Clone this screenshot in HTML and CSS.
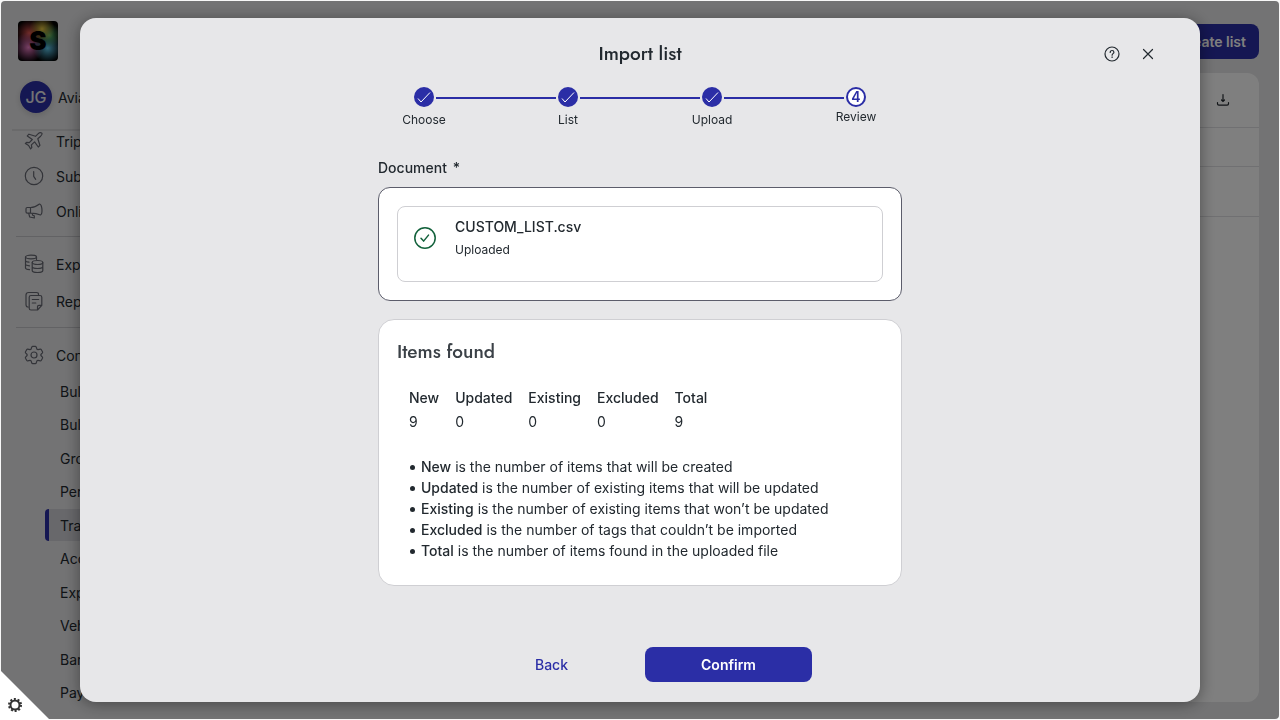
FILE: index.html
```
<!DOCTYPE html>
<html lang="en">
<head>
  <meta charset="UTF-8" />
  <meta name="viewport" content="width=device-width, initial-scale=1" />
  <title>Import list</title>
  <link rel="stylesheet" href="styles.css">
</head>
<body>
  <div class="app">
    <aside class="sidebar">
      <div class="sidebar-top">
        <svg class="logo" viewBox="0 0 40 40" role="img" aria-label="Logo">
          <defs>
            <radialGradient id="red" cx="28%" cy="30%" r="34%"><stop offset="0" stop-color="#e05850" /><stop offset="1" stop-color="#c4404a" stop-opacity="0" /></radialGradient>
            <radialGradient id="yellow" cx="60%" cy="20%" r="32%"><stop offset="0" stop-color="#e8c840" /><stop offset="1" stop-color="#d0b040" stop-opacity="0" /></radialGradient>
            <radialGradient id="green" cx="78%" cy="36%" r="30%"><stop offset="0" stop-color="#58b868" /><stop offset="1" stop-color="#4fb070" stop-opacity="0" /></radialGradient>
            <radialGradient id="blue" cx="74%" cy="68%" r="36%"><stop offset="0" stop-color="#60ccf0" /><stop offset="1" stop-color="#50b8dc" stop-opacity="0" /></radialGradient>
            <radialGradient id="pink" cx="26%" cy="66%" r="38%"><stop offset="0" stop-color="#f080c8" /><stop offset="1" stop-color="#d868b8" stop-opacity="0" /></radialGradient>
          </defs>
          <rect width="40" height="40" rx="4" fill="#000" />
          <rect width="40" height="40" rx="4" fill="url(#red)" />
          <rect width="40" height="40" rx="4" fill="url(#pink)" />
          <rect width="40" height="40" rx="4" fill="url(#blue)" />
          <rect width="40" height="40" rx="4" fill="url(#green)" />
          <rect width="40" height="40" rx="4" fill="url(#yellow)" />
          <text class="logo-letter" x="20" y="29" text-anchor="middle">S</text>
        </svg>
        <div class="user">
          <span class="avatar">JG</span>
          <span>Avia</span>
        </div>
      </div>

      <nav class="nav">
        <a class="nav-item" href="#">
          <svg class="icon" viewBox="0 0 20 20"><path d="M17.8 2.2c-1-1-2.700-.5-3.800.6L11.500 5.300 5 3.200 3.300 4.900l5 3.600-3 3.200-2.700-.4-1.200 1.200 3.200 2 2 3.400 1.200-1.200-.4-2.800 3.200-3 3.700 5.100 1.600-1.700-2.100-6.500 2.800-2.600c1-1 1.900-2.200 1.200-3z" /></svg>
          <span>Trip</span>
        </a>
        <a class="nav-item" href="#">
          <svg class="icon" viewBox="0 0 20 20"><circle cx="10" cy="10" r="8.700" /><path d="M9.700 5.500v4.800l2 3" /></svg>
          <span>Sub</span>
        </a>
        <a class="nav-item" href="#">
          <svg class="icon" viewBox="0 0 20 20"><path d="M6.500 6.500H3.200C2.300 6.500 2 7 2 7.800v3c0 .9.400 1.400 1.200 1.400h3.300zM6.500 6.500c3.500 0 6.500-1.500 9-3.500 2.600-.3 3.500 9.500 1 11-3-1.300-6.500-1.800-10-1.800M4.700 12.300l1 3.700 4.600 1v-2.200l-1.600-.5-.5-2" /></svg>
          <span>Onli</span>
        </a>
        <hr>
        <a class="nav-item tall" href="#">
          <svg class="icon" viewBox="0 0 20 20"><ellipse cx="7" cy="3" rx="5.500" ry="1.800" /><path d="M1.500 3v11c0 .9 1.700 1.500 4 1.700M1.500 6.500c0 .9 1.500 1.500 3.500 1.700M1.500 10c0 .9 1.500 1.600 4 1.800M12.500 3v2.500" /><ellipse cx="13.500" cy="8.500" rx="5.300" ry="2" /><path d="M8.200 8.500v8c0 1.200 2.300 2 5.300 2s5.300-.8 5.300-2v-8M8.200 12.500c0 1.200 2.300 2 5.300 2s5.300-.8 5.300-2" /></svg>
          <span>Exp</span>
        </a>
        <a class="nav-item tall" href="#">
          <svg class="icon" viewBox="0 0 20 20"><path d="M14.500 3.500c0-1.500-.5-2-2-2h-8c-1.500 0-2.500 1-2.500 2.500v9.500c0 1.500.5 2.500 2 2.500M7 4.500h9c1 0 1.800.8 1.800 1.800v8L13.500 19H7c-1 0-1.800-.8-1.800-1.800V6.300c0-1 .8-1.800 1.800-1.800zM13.500 19v-3.200c0-.9.600-1.500 1.500-1.500h2.800M8.300 8.500h6.400M8.300 12h3.500" /></svg>
          <span>Rep</span>
        </a>
        <hr>
        <a class="nav-item tall" href="#">
          <svg class="icon" viewBox="0 0 20 20"><path d="M7 4.200 7.800 2q.2-.6.900-.6h2.600q.7 0 .9.600L13 4.200l1 .5 2.300-.5q.6-.1 1 .5l1.200 2.100q.3.600-.1 1.100L16.900 9.500v1l1.500 1.600q.4.500.1 1.100l-1.200 2.100q-.4.600-1 .5L14 15.300l-1 .5-.8 2.200q-.2.600-.9.600H8.700q-.7 0-.9-.6L7 15.800l-1-.5-2.300.5q-.6.100-1-.5l-1.200-2.100q-.3-.6.100-1.100L3.100 10.500v-1L1.600 7.900q-.4-.5-.1-1.100l1.200-2.100q.4-.6 1-.5L6 4.700z" /><circle cx="10" cy="10" r="3" /></svg>
          <span>Con</span>
        </a>
        <ul class="subnav">
          <li><a href="#">Bull</a></li>
          <li><a href="#">Bull</a></li>
          <li><a href="#">Gro</a></li>
          <li><a href="#">Per</a></li>
          <li><a href="#" class="active">Tra</a></li>
          <li><a href="#">Acc</a></li>
          <li><a href="#">Exp</a></li>
          <li><a href="#">Veh</a></li>
          <li><a href="#">Bar</a></li>
          <li><a href="#">Pay</a></li>
        </ul>
      </nav>
    </aside>

    <main class="main">
      <button type="button" class="btn btn-create">Create list</button>
      <section class="panel">
        <div class="panel-row panel-tools">
          <button type="button" class="icon-btn" aria-label="Download">
            <svg class="icon-dark" width="14" height="14" viewBox="0 0 14 14"><path d="M7 1.500v7M5.500 7l1.500 1.500L8.500 7M1.500 9.500v1.300c0 .9.500 1.400 1.400 1.400h8.200c.9 0 1.400-.5 1.400-1.400V9.500" /></svg>
          </button>
        </div>
        <div class="panel-row panel-head"></div>
        <div class="panel-row panel-line"></div>
      </section>
    </main>
  </div>

  <div class="overlay">
    <div class="modal" role="dialog" aria-modal="true" aria-labelledby="modalTitle">
      <header class="modal-header">
        <h1 id="modalTitle">Import list</h1>
        <div class="modal-actions">
          <button type="button" class="icon-btn" aria-label="Help">
            <svg class="icon-dark" width="16" height="16" viewBox="0 0 16 16"><circle cx="8" cy="8" r="7" /><path d="M6.200 6.400c0-1.100.8-1.900 1.900-1.900s1.800.7 1.800 1.700c0 1.400-1.800 1.500-1.800 3M8.100 10.900v.6" /></svg>
          </button>
          <button type="button" class="icon-btn" aria-label="Close">
            <svg class="icon-dark" width="16" height="16" viewBox="0 0 16 16"><path d="M3.500 3.500l9 9M12.500 3.500l-9 9" /></svg>
          </button>
        </div>
      </header>

      <ol class="steps">
        <li class="step done">
          <span class="dot"><svg width="16" height="16" viewBox="0 0 16 16"><path d="M2 9.500 5 13 14 3.500" /></svg></span>
          <span class="step-label">Choose</span>
        </li>
        <li class="step done">
          <span class="dot"><svg width="16" height="16" viewBox="0 0 16 16"><path d="M2 9.500 5 13 14 3.500" /></svg></span>
          <span class="step-label">List</span>
        </li>
        <li class="step done">
          <span class="dot"><svg width="16" height="16" viewBox="0 0 16 16"><path d="M2 9.500 5 13 14 3.500" /></svg></span>
          <span class="step-label">Upload</span>
        </li>
        <li class="step current" aria-current="step">
          <span class="dot">4</span>
          <span class="step-label">Review</span>
        </li>
      </ol>

      <div class="content">
        <p class="field-label">Document <span class="required">*</span></p>
        <div class="dropzone">
          <div class="file">
            <svg class="file-icon" width="24" height="24" viewBox="0 0 24 24"><circle cx="12" cy="12" r="10.200" /><path d="M8 12.300l2.600 2.800 4.900-6" /></svg>
            <div>
              <p class="file-name">CUSTOM_LIST.csv</p>
              <p class="file-status">Uploaded</p>
            </div>
          </div>
        </div>

        <section class="summary">
          <h2>Items found</h2>
          <table class="counts">
            <thead>
              <tr><th>New</th><th>Updated</th><th>Existing</th><th>Excluded</th><th>Total</th></tr>
            </thead>
            <tbody>
              <tr><td>9</td><td>0</td><td>0</td><td>0</td><td>9</td></tr>
            </tbody>
          </table>
          <ul class="legend">
            <li><b>New</b> is the number of items that will be created</li>
            <li><b>Updated</b> is the number of existing items that will be updated</li>
            <li><b>Existing</b> is the number of existing items that won’t be updated</li>
            <li><b>Excluded</b> is the number of tags that couldn’t be imported</li>
            <li><b>Total</b> is the number of items found in the uploaded file</li>
          </ul>
        </section>
      </div>

      <footer class="modal-footer">
        <button type="button" class="btn btn-text">Back</button>
        <button type="button" class="btn btn-primary">Confirm</button>
      </footer>
    </div>
  </div>

  <button type="button" class="corner" aria-label="Settings">
    <svg width="16" height="16" viewBox="0 0 16 16"><circle class="gear-teeth" cx="8" cy="8" r="6" /><circle class="gear-ring" cx="8" cy="8" r="4.500" /></svg>
  </button>
</body>
</html>
```
FILE: styles.css
```
* {
  box-sizing: border-box;
}

body {
  margin: 0;
  padding: 1px;
  height: 100vh;
  overflow: hidden;
  background: #f7f7f7;
  font-family: Inter, sans-serif;
  font-size: 14px;
  color: #22292f;
}

h1,
h2,
p,
ul,
ol {
  margin: 0;
  padding: 0;
}

ul,
ol {
  list-style: none;
}

a {
  color: inherit;
  text-decoration: none;
}

button {
  border: none;
  padding: 0;
  background: none;
  font: inherit;
  cursor: pointer;
}

svg {
  display: block;
  fill: none;
  flex-shrink: 0;
}

/* page behind the modal */
.app {
  height: 100%;
  display: flex;
  background: #e7e7e9;
  border-radius: 4px;
  overflow: hidden;
}

.sidebar {
  width: 240px;
  flex-shrink: 0;
  overflow: hidden;
}

.sidebar-top {
  position: relative;
  height: 130px;
  margin-left: 11px;
  padding: 20px 0 0 6px;
  border-bottom: 2px solid #d4d4d7;
}

.logo {
  width: 40px;
  height: 40px;
}

.logo-letter {
  font-family: Inter, sans-serif;
  font-weight: 900;
  font-size: 26px;
  fill: #000;
}

.user {
  display: flex;
  align-items: center;
  gap: 6px;
  margin: 20px 0 0 2px;
}

.avatar {
  display: flex;
  align-items: center;
  justify-content: center;
  width: 32px;
  height: 32px;
  border-radius: 50%;
  background: #2b2ea6;
  color: #e7e7e9;
  font-size: 16px;
  font-weight: 500;
  box-shadow: 0 2px 6px rgba(0, 0, 0, 0.15);
}

.nav {
  margin-top: -7px;
  padding-left: 15px;
}

.nav-item {
  display: flex;
  align-items: center;
  gap: 12px;
  height: 34px;
  margin-bottom: 1px;
  padding-left: 8px;
}

.nav-item.tall {
  height: 36px;
}

.nav hr {
  height: 1px;
  margin: 8px 0 9px;
  border: none;
  background: #c4c4c8;
}

.icon {
  width: 20px;
  height: 20px;
  stroke: #666872;
  stroke-width: 1.200;
  stroke-linecap: round;
  stroke-linejoin: round;
}

.subnav {
  display: grid;
  grid-auto-rows: 1fr;
  height: 335px;
  margin: 2px 0 0 29px;
}

.subnav a {
  display: flex;
  align-items: center;
  height: 32px;
  padding-left: 11px;
  border-left: 4px solid transparent;
}

.subnav .active {
  border-radius: 4px;
  border-color: #2b2ea6;
  background: #d0d0d6;
}

.main {
  flex: 1;
  display: flex;
  flex-direction: column;
  padding: 23px 20px 17px 0;
}

.btn {
  height: 35px;
  border-radius: 8px;
  font-weight: 600;
}

.btn-create {
  align-self: flex-end;
  padding: 0 13px;
  background: #2b2ea6;
  color: #fff;
}

.panel {
  flex: 1;
  margin-top: 14px;
  background: #fff;
  border-radius: 12px;
}

.panel-row {
  border-bottom: 1px solid #e1e1e4;
}

.panel-tools {
  display: flex;
  align-items: center;
  justify-content: flex-end;
  height: 55px;
  padding-right: 29px;
}

.panel-head {
  height: 39px;
}

.panel-line {
  height: 50px;
}

.icon-dark {
  stroke: #22292f;
  stroke-width: 1.200;
  stroke-linecap: round;
}

/* modal */
.overlay {
  position: fixed;
  inset: 1px;
  padding: 17px 79px;
  border-radius: 4px;
  background: rgba(0, 0, 0, 0.5);
  overflow: hidden;
}

.modal {
  height: 100%;
  display: flex;
  flex-direction: column;
  align-items: center;
  background: #e7e7e9;
  border-radius: 16px;
  box-shadow: 0 2px 16px rgba(0, 0, 0, 0.4);
}

.modal-header {
  position: relative;
  width: 100%;
  padding-top: 24px;
}

h1,
h2 {
  font-family: Jost, Lato, sans-serif;
  font-size: 19px;
  font-weight: 500;
  line-height: 24px;
}

h1 {
  text-align: center;
}

.modal-actions {
  position: absolute;
  top: 28px;
  right: 44px;
  display: flex;
  gap: 20px;
}

.steps {
  display: flex;
  margin-top: 21px;
}

.step {
  position: relative;
  width: 144px;
  display: flex;
  flex-direction: column;
  align-items: center;
  font-size: 12px;
  line-height: 16px;
}

/* line to the next step */
.step:not(:last-child)::after {
  content: "";
  position: absolute;
  top: 10px;
  left: 84px;
  width: 120px;
  height: 2px;
  background: #2b2ea6;
}

.dot {
  display: flex;
  align-items: center;
  justify-content: center;
  width: 20px;
  height: 20px;
  margin-bottom: 5px;
  border-radius: 50%;
  background: #2b2ea6;
}

.dot svg {
  stroke: #fff;
}

.current .dot {
  margin-bottom: 2px;
  border: 2px solid #2b2ea6;
  background: #fff;
  color: #2b2ea6;
  font-weight: 600;
  font-size: 14px;
}

.content {
  width: 524px;
  max-width: 100%;
  margin-top: 29px;
}

.field-label {
  font-weight: 500;
  line-height: 22px;
}

.required {
  margin-left: 2px;
}

.dropzone {
  margin-top: 8px;
  padding: 18px;
  border: 1px solid #5c5d6b;
  border-radius: 12px;
  background: #fff;
}

.file {
  display: flex;
  gap: 18px;
  min-height: 76px;
  padding: 10px 15px;
  border: 1px solid #cfcfd3;
  border-radius: 8px;
}

.file-icon {
  margin-top: 9px;
  stroke: #12613b;
  stroke-width: 1.500;
  stroke-linecap: round;
  stroke-linejoin: round;
}

.file-name {
  font-weight: 500;
  line-height: 20px;
}

.file-status {
  margin-top: 5px;
  font-size: 12px;
  line-height: 16px;
}

.summary {
  margin-top: 18px;
  padding: 20px 18px 24px;
  border: 1px solid #cfcfd3;
  border-radius: 16px;
  background: #fff;
}

h2 {
  color: #3b4147;
}

.counts {
  margin: 22px 0 0 12px;
  border-collapse: collapse;
  line-height: 24px;
}

.counts th,
.counts td {
  padding: 0 16px 0 0;
  text-align: left;
}

.counts th {
  font-weight: 500;
}

.legend {
  margin: 22px 0 0 24px;
  line-height: 21px;
}

.legend li::before {
  content: "";
  float: left;
  width: 5px;
  height: 5px;
  margin: 9px 0 0 -11px;
  border-radius: 50%;
  background: #22292f;
}

.legend b {
  font-weight: 500;
}

.modal-footer {
  display: flex;
  gap: 10px;
  margin: auto 0 20px;
}

.modal-footer .btn {
  width: 167px;
}

.btn-text {
  color: #2b2ea6;
}

.modal-footer .btn-text {
  font-weight: 500;
}

.btn-primary {
  background: #2b2ea6;
  color: #fff;
}

/* settings tab in the page corner */
.corner {
  position: fixed;
  left: 0;
  bottom: 0;
  display: flex;
  align-items: flex-end;
  width: 50px;
  height: 50px;
  padding: 0 0 7px 7px;
  background: #fff;
  clip-path: polygon(0 0, 100% 100%, 0 100%);
}

.gear-teeth {
  stroke: #333;
  stroke-width: 2;
  stroke-dasharray: 2 1.770;
}

.gear-ring {
  stroke: #333;
  stroke-width: 2;
}
```
